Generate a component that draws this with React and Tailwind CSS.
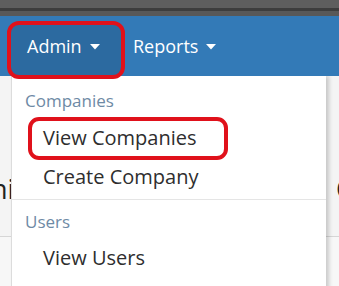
import React from "react";

function Caret() {
  return (
    <svg width="10" height="6" viewBox="0 0 10 6" className="ml-[8px] mt-[1px]">
      <path d="M0 0 L10 0 L5 5.5 Z" fill="#ffffff" />
    </svg>
  );
}

export default function App() {
  return (
    <div className="relative w-[339px] h-[286px] overflow-hidden bg-[#f4f4f4] font-['Open_Sans',sans-serif]">
      {/* window chrome */}
      <div className="h-[8px] bg-[#5e5e5e]" />
      <div className="h-[3px] bg-[#3d3d3d]" />
      <div className="h-[5px] bg-[#585858]" />

      {/* navbar, kept above the menu so the highlight overlaps it */}
      <div className="relative z-10 h-[60px] bg-[#337ab7] flex items-center pl-[7px]">
        <div className="w-[118px] h-[58px] mt-[8px] rounded-[12px] border-[4px] border-[#e0111b] bg-[#2c6aa0] flex items-center pl-[16px] pb-[8px]">
          <span className="text-[18px] text-white leading-none">Admin</span>
          <Caret />
        </div>
        <div className="flex items-center ml-[8px]">
          <span className="text-[18px] text-white leading-none">Reports</span>
          <Caret />
        </div>
      </div>

      {/* page behind the menu */}
      <div className="h-[161px] border-b border-[#d6d6d6] flex items-end justify-between pb-[34px]">
        <span className="text-[27px] text-[#222] leading-none ml-[-9px]">ni</span>
        <span className="text-[27px] text-[#222] leading-none mr-[-14px]">C</span>
      </div>
      <div className="h-[50px] bg-[#f7f7f7]" />

      {/* dropdown menu */}
      <div className="absolute left-[11px] top-[76px] w-[315px] h-[220px] bg-white border-l border-[#dcdcdc] shadow-[3px_0_4px_rgba(0,0,0,0.18)] pt-[11px]">
        <div className="h-[28px] flex items-center pl-[13px] text-[17px] text-[#6e8aa5]">Companies</div>
        <div className="relative mt-[3px] h-[39px] flex items-center pl-[31px] text-[20px] text-[#2e2e2e]">
          View Companies
          <div className="absolute left-[16px] top-[-1px] w-[200px] h-[43px] rounded-[11px] border-[4px] border-[#e0111b]" />
        </div>
        <div className="h-[39px] flex items-center pl-[31px] text-[20px] text-[#2e2e2e]">Create Company</div>
        <div className="mt-[3px] h-px bg-[#e5e5e5]" />
        <div className="mt-[8px] h-[28px] flex items-center pl-[13px] text-[17px] text-[#6e8aa5]">Users</div>
        <div className="mt-[2px] h-[39px] flex items-center pl-[31px] text-[20px] text-[#2e2e2e]">View Users</div>
      </div>
    </div>
  );
}
